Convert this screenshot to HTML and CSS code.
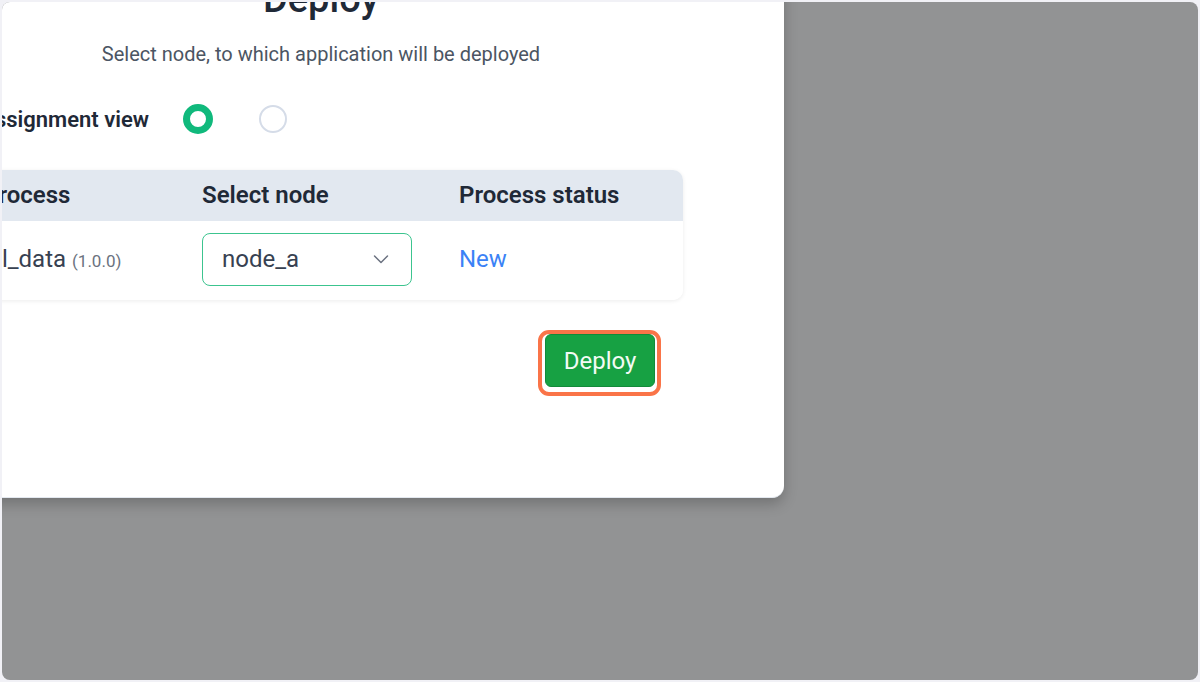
FILE: index.html
```html
<!DOCTYPE html>
<html lang="en">
<head>
  <meta charset="UTF-8">
  <title>Deploy</title>
  <link rel="stylesheet" href="styles.css">
</head>
<body>
  <div class="frame">
    <div class="screen">
      <div class="modal">
        <h2 class="modal-title">Deploy</h2>
        <p class="modal-sub">Select node, to which application will be deployed</p>

        <div class="view-row">
          <span class="view-label">Assignment view</span>
          <span class="radio radio-on"></span>
          <span class="radio"></span>
        </div>

        <div class="proc-table">
          <div class="proc-head">
            <div class="cell">Process</div>
            <div class="cell">Select node</div>
            <div class="cell">Process status</div>
          </div>
          <div class="proc-row">
            <div class="cell">all_data <span class="version">(1.0.0)</span></div>
            <div class="cell">
              <div class="select">
                <span>node_a</span>
                <svg width="20" height="20" viewBox="0 0 20 20"><path d="M3.5 7l6.5 6.5 6.5-6.5" fill="none" stroke="#6b7280" stroke-width="1.5" stroke-linecap="round" stroke-linejoin="round"/></svg>
              </div>
            </div>
            <div class="cell status-new">New</div>
          </div>
        </div>

        <div class="actions">
          <button class="deploy-btn">Deploy</button>
        </div>
      </div>
    </div>
  </div>
</body>
</html>
```

FILE: styles.css
```css
body {
  margin: 0;
  background-color: #f1f1f6;
  font-family: Roboto, "Liberation Sans", Arial, sans-serif;
}
.frame {
  padding: 2px;
  height: 678px;
}
.screen {
  position: relative;
  height: 678px;
  background-color: #929394;
  border-radius: 8px;
  overflow: hidden;
}
.modal {
  position: absolute;
  left: -144px;
  top: -48px;
  width: 926px;
  height: 544px;
  box-sizing: border-box;
  padding-top: 23px;
  background-color: #fff;
  border-radius: 12px;
  border-bottom: 1px solid #e3e8ef;
  box-shadow: 0 6px 14px rgba(0, 0, 0, 0.22);
}
.modal-title {
  margin: 0;
  text-align: center;
  font-size: 38px;
  line-height: 44px;
  font-weight: 500;
  color: #1f2937;
}
.modal-sub {
  margin: 19px 0 0 0;
  text-align: center;
  font-size: 20px;
  line-height: 28px;
  color: #4b5563;
}
.view-row {
  display: flex;
  align-items: center;
  height: 30px;
  margin: 36px 0 0 103px;
}
.view-label {
  width: 188px;
  text-align: right;
  font-size: 22px;
  font-weight: 600;
  color: #1f2937;
  margin-right: 34px;
}
.radio {
  width: 28px;
  height: 28px;
  box-sizing: border-box;
  border: 2px solid #d5dce8;
  border-radius: 50%;
  margin-left: 46px;
}
.radio-on {
  width: 30px;
  height: 30px;
  border: 7px solid #10b97c;
  margin-left: 0;
}
.proc-table {
  margin: 36px 0 0 103px;
  width: 722px;
  border-radius: 10px;
  overflow: hidden;
  box-shadow: 0 1px 4px rgba(0, 0, 0, 0.08);
}
.proc-head,
.proc-row {
  display: grid;
  grid-template-columns: 217px 257px 1fr;
  align-items: center;
  box-sizing: border-box;
}
.proc-head {
  height: 51px;
  padding-bottom: 2px;
  background-color: #e2e8f0;
  font-size: 24px;
  font-weight: 600;
  color: #1f2937;
}
.proc-row {
  height: 79px;
  padding-bottom: 3px;
  background-color: #fff;
  font-size: 24px;
  color: #374151;
}
.cell {
  padding-left: 22px;
}
.proc-head .cell + .cell,
.proc-row .cell + .cell {
  padding-left: 24px;
}
.version {
  font-size: 17px;
  color: #6b7280;
}
.select {
  display: flex;
  align-items: center;
  justify-content: space-between;
  width: 210px;
  height: 53px;
  box-sizing: border-box;
  padding: 0 20px 0 19px;
  border: 1.5px solid #3cc48f;
  border-radius: 8px;
  color: #374151;
}
.status-new {
  color: #3b82f6;
}
.actions {
  display: flex;
  margin: 34px 0 0 687px;
}
.deploy-btn {
  position: relative;
  width: 110px;
  height: 53px;
  background-color: #17a143;
  border: 1px solid #138a3a;
  border-radius: 6px;
  color: #f3fbf5;
  font-family: Roboto, "Liberation Sans", Arial, sans-serif;
  font-size: 24px;
  cursor: pointer;
}
.deploy-btn::after {
  content: "";
  position: absolute;
  top: -5px;
  left: -8px;
  right: -7px;
  bottom: -10px;
  border: 4px solid #fa7448;
  border-radius: 11px;
}
```
